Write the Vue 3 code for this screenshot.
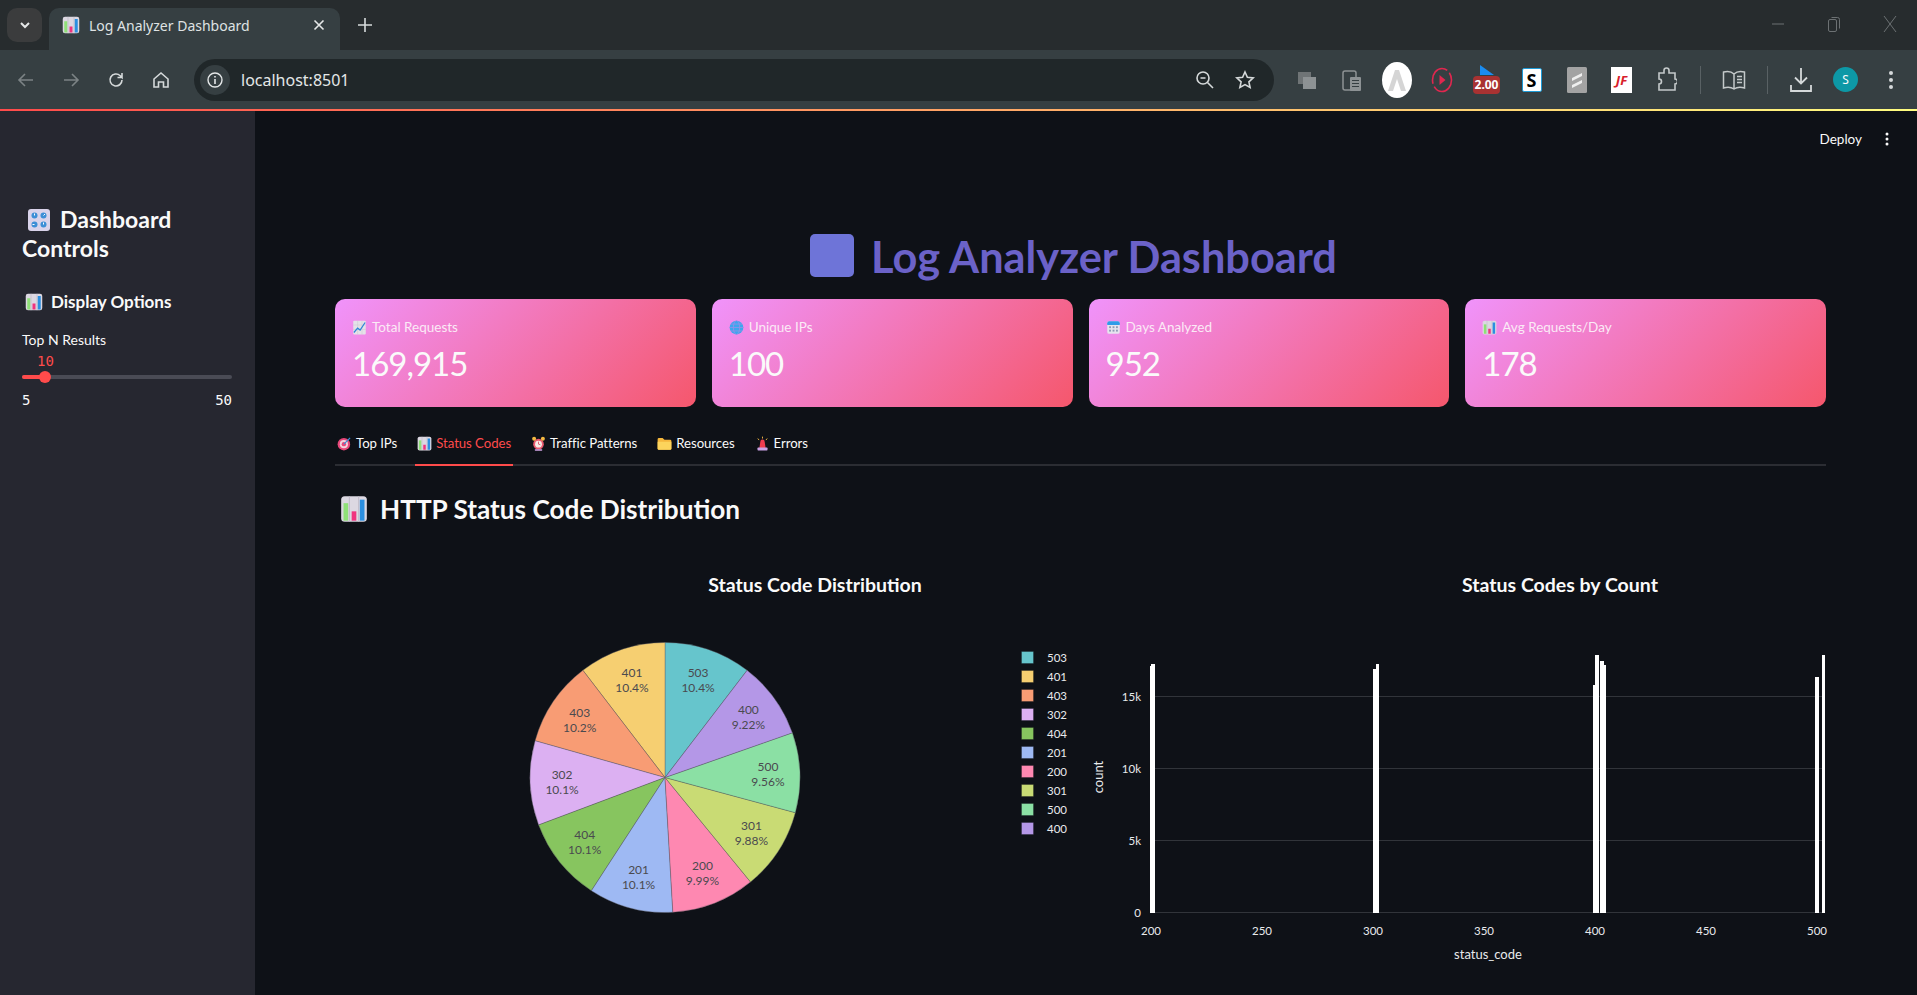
<template>
  <!-- emoji drawings, reused below -->
  <svg class="defs" width="0" height="0">
    <symbol id="e-chart" viewBox="0 0 24 24">
      <rect x="1" y="1" width="22" height="22" rx="3" fill="#dcd8e2" />
      <path d="M8 1v22M16 1v22" stroke="#bdb8c6" stroke-width=".8" />
      <rect x="3" y="7" width="4" height="15" fill="#8fe078" />
      <rect x="10" y="14" width="4" height="8" fill="#f0337f" />
      <rect x="17" y="4" width="4" height="18" fill="#2b8fe0" />
    </symbol>
    <symbol id="e-knobs" viewBox="0 0 24 24">
      <rect x="1" y="1" width="22" height="22" rx="3" fill="#d9d3ea" />
      <g fill="#3d8fd6">
        <circle cx="7.5" cy="7.5" r="3" /><circle cx="16.5" cy="7.5" r="3" />
        <circle cx="7.5" cy="16.5" r="3" /><circle cx="16.5" cy="16.5" r="3" />
      </g>
      <path d="M7.5 7.5V5.5M16.5 7.5l1.5-1.5M7.5 16.5H5.5M16.5 16.5v-2" stroke="#fff" stroke-width="1" />
    </symbol>
    <symbol id="e-up" viewBox="0 0 24 24">
      <rect x="2" y="1" width="20" height="22" rx="1.5" fill="#e4e2e8" />
      <path d="M2 8h20M2 15h20M9 1v22M16 1v22" stroke="#c6c4cc" stroke-width=".7" />
      <path d="M3 20l6-7 4 3 8-12" fill="none" stroke="#2f86d8" stroke-width="2" />
    </symbol>
    <symbol id="e-globe" viewBox="0 0 24 24">
      <circle cx="12" cy="12" r="11" fill="#3ea6ee" />
      <ellipse cx="12" cy="12" rx="5" ry="11" fill="none" stroke="#9b8fe8" stroke-width="1.2" />
      <path d="M1 12h22M3 6.5h18M3 17.5h18" stroke="#9b8fe8" stroke-width="1.2" />
    </symbol>
    <symbol id="e-cal" viewBox="0 0 24 24">
      <rect x="2" y="2" width="20" height="20" rx="3" fill="#e6e4ee" />
      <path d="M2 8V5a3 3 0 0 1 3-3h14a3 3 0 0 1 3 3v3z" fill="#2f9be8" />
      <g fill="#8f9bb5">
        <rect x="5" y="10" width="3" height="3" /><rect x="10.500" y="10" width="3" height="3" /><rect x="16" y="10" width="3" height="3" />
        <rect x="5" y="15.500" width="3" height="3" /><rect x="10.500" y="15.500" width="3" height="3" /><rect x="16" y="15.500" width="3" height="3" />
      </g>
    </symbol>
    <symbol id="e-target" viewBox="0 0 24 24">
      <circle cx="11" cy="13" r="10" fill="#e8477a" />
      <circle cx="11" cy="13" r="6.500" fill="#f3d3de" />
      <circle cx="11" cy="13" r="3.500" fill="#e8477a" />
      <path d="M11 13L21 3" stroke="#3a93dc" stroke-width="2" />
    </symbol>
    <symbol id="e-alarm" viewBox="0 0 24 24">
      <circle cx="12" cy="13" r="8.500" fill="#ea5a70" />
      <circle cx="12" cy="13" r="5.500" fill="#f7ebe6" />
      <path d="M12 9v4l3 1" fill="none" stroke="#d3455c" stroke-width="1.300" />
      <circle cx="5" cy="4.500" r="3.200" fill="#f4b942" /><circle cx="19" cy="4.500" r="3.200" fill="#f4b942" />
      <rect x="6" y="21" width="12" height="2.500" rx="1" fill="#d4a6e8" />
    </symbol>
    <symbol id="e-folder" viewBox="0 0 24 24">
      <path d="M1 5a2 2 0 0 1 2-2h6l3 3h9a2 2 0 0 1 2 2v12a2 2 0 0 1-2 2H3a2 2 0 0 1-2-2z" fill="#f6b73c" />
      <path d="M1 9h22v11a2 2 0 0 1-2 2H3a2 2 0 0 1-2-2z" fill="#fcd45c" />
    </symbol>
    <symbol id="e-siren" viewBox="0 0 24 24">
      <path d="M7 19l1.500-10a3.500 3.500 0 0 1 7 0L17 19z" fill="#ee3c50" />
      <rect x="4" y="18.500" width="16" height="4.500" rx="1" fill="#c9a2e6" />
      <path d="M12 1v3M4.500 4l2 2.500M19.500 4l-2 2.500" stroke="#f4b942" stroke-width="1.500" />
    </symbol>
  </svg>

  <div class="window">
    <!-- browser tab strip -->
    <div class="tabstrip">
      <div class="tab-menu">
        <svg width="14" height="14" viewBox="0 0 14 14"><path d="M3 5l4 4 4-4" fill="none" stroke="#e6e8e8" stroke-width="2" /></svg>
      </div>
      <div class="browser-tab">
        <svg class="favicon" width="18" height="20"><use href="#e-chart" /></svg>
        <span class="tab-title">Log Analyzer Dashboard</span>
        <svg class="tab-close" width="12" height="12" viewBox="0 0 12 12"><path d="M1.500 1.500l9 9M10.500 1.500l-9 9" stroke="#e6e8e8" stroke-width="1.600" /></svg>
      </div>
      <svg class="tab-plus" width="14" height="14" viewBox="0 0 14 14"><path d="M7 0v14M0 7h14" stroke="#d8dcdc" stroke-width="1.600" /></svg>
      <div class="win-controls">
        <svg width="14" height="14" viewBox="0 0 14 14"><path d="M1 7h12" stroke="#6c7173" stroke-width="1" /></svg>
        <svg width="14" height="18" viewBox="0 0 14 18"><rect x="1.500" y="4.500" width="8" height="12" rx="1.500" fill="none" stroke="#6c7173" /><path d="M4.500 2.500h6a2 2 0 0 1 2 2v9" fill="none" stroke="#6c7173" /></svg>
        <svg width="14" height="18" viewBox="0 0 14 18"><path d="M1 1l12 16M13 1L1 17" stroke="#6c7173" stroke-width="1" /></svg>
      </div>
    </div>

    <!-- browser toolbar -->
    <div class="toolbar">
      <div class="nav-icons">
        <svg width="18" height="18" viewBox="0 0 18 18"><path d="M16 9H2M8 3L2 9l6 6" fill="none" stroke="#7c8385" stroke-width="1.600" /></svg>
        <svg width="18" height="18" viewBox="0 0 18 18"><path d="M2 9h14M10 3l6 6-6 6" fill="none" stroke="#7c8385" stroke-width="1.600" /></svg>
        <svg width="18" height="18" viewBox="0 0 18 18"><path d="M15 9a6 6 0 1 1-1.800-4.300L15 6.500V2M15 6.500h-4.500" fill="none" stroke="#d5d9da" stroke-width="1.600" /></svg>
        <svg width="18" height="18" viewBox="0 0 18 18"><path d="M2 8l7-6 7 6v8h-4.500v-5h-5v5H2z" fill="none" stroke="#d5d9da" stroke-width="1.600" /></svg>
      </div>
      <div class="omnibox">
        <div class="info-pill">
          <svg width="16" height="16" viewBox="0 0 16 16"><circle cx="8" cy="8" r="7" fill="none" stroke="#e4e7e8" stroke-width="1.400" /><path d="M8 7v5M8 4v1.600" stroke="#e4e7e8" stroke-width="1.600" /></svg>
        </div>
        <span class="url">localhost:8501</span>
        <span class="omni-space"></span>
        <svg width="20" height="20" viewBox="0 0 20 20"><circle cx="8" cy="8" r="6" fill="none" stroke="#d5d9da" stroke-width="1.600" /><path d="M12.500 12.500L18 18M5.500 8h5" stroke="#d5d9da" stroke-width="1.600" /></svg>
        <svg class="star" width="20" height="20" viewBox="0 0 20 20"><path d="M10 2l2.400 5.300 5.800.6-4.300 3.900 1.200 5.700L10 14.600l-5.100 2.900 1.200-5.700L1.800 7.900l5.800-.6z" fill="none" stroke="#d5d9da" stroke-width="1.600" /></svg>
      </div>
      <div class="exts">
        <span class="ext"><svg width="20" height="20" viewBox="0 0 20 20"><rect x="1" y="2" width="13" height="12" fill="#6f7476" /><rect x="6" y="7" width="13" height="12" fill="#8d9294" /></svg></span>
        <span class="ext"><svg width="20" height="24" viewBox="0 0 20 24"><rect x="1" y="3" width="13" height="19" rx="2" fill="none" stroke="#8d9294" stroke-width="1.500" /><rect x="8" y="9" width="11" height="14" rx="1" fill="#8d9294" /><path d="M10 12.500h7M10 15.500h7M10 18.500h7" stroke="#363f42" /></svg></span>
        <span class="ext"><svg width="30" height="36" viewBox="0 0 30 36"><ellipse cx="15" cy="18" rx="15" ry="18" fill="#fff" /><path d="M6 29L13 8h4l7 21-5 0-4-12-4 12z" fill="#d5d5d5" /></svg></span>
        <span class="ext"><svg width="22" height="26" viewBox="0 0 22 26"><ellipse cx="11" cy="13" rx="9.500" ry="11.500" fill="none" stroke="#e0274f" stroke-width="1.600" stroke-dasharray="26 3" /><path d="M8.500 8l6 5-6 5z" fill="#e0274f" /></svg></span>
        <span class="ext speed">
          <svg width="16" height="10" viewBox="0 0 16 10"><path d="M1 0l14 10H1z" fill="#1a8cf0" /></svg>
          <b class="speed-badge">2.00</b>
        </span>
        <span class="ext"><b class="ext-s">S</b></span>
        <span class="ext"><svg width="20" height="26" viewBox="0 0 20 26"><rect width="20" height="26" rx="1.500" fill="#a3a3a3" /><path d="M5 11l10-5v3L5 14zM5 18l10-5v3L5 21z" fill="#eee" /></svg></span>
        <span class="ext"><b class="ext-jf">JF</b></span>
        <span class="ext"><svg width="20" height="26" viewBox="0 0 20 26"><path d="M2 6h5V3.500a2.500 2.500 0 0 1 5 0V6h6v6a2.500 2.500 0 0 1 0 5v6H2v-6a2.500 2.500 0 0 0 0-5z" fill="none" stroke="#c4c9ca" stroke-width="1.600" /></svg></span>
      </div>
      <span class="tool-sep"></span>
      <span class="tool-slot"><svg width="24" height="22" viewBox="0 0 24 22"><path d="M12 5C9 2 5 2 1.500 3v16C5 18 9 18 12 20c3-2 7-2 10.500-1V3C19 2 15 2 12 5zM12 5v15" fill="none" stroke="#c4c9ca" stroke-width="1.500" /><path d="M15 7.500h5M15 10.500h5M15 13.500h5" stroke="#c4c9ca" stroke-width="1.300" /></svg></span>
      <span class="tool-sep"></span>
      <span class="tool-slot"><svg width="22" height="26" viewBox="0 0 22 26"><path d="M11 1v15M5 10.500l6 6 6-6M1 18v6h20v-6" fill="none" stroke="#d5d9da" stroke-width="1.800" /></svg></span>
      <span class="tool-slot"><span class="avatar">S</span></span>
      <span class="tool-slot"><svg width="4" height="20" viewBox="0 0 4 20"><circle cx="2" cy="3" r="2" fill="#d5d9da" /><circle cx="2" cy="10" r="2" fill="#d5d9da" /><circle cx="2" cy="17" r="2" fill="#d5d9da" /></svg></span>
    </div>
    <div class="decoration"></div>

    <div class="page">
      <aside class="sidebar">
        <h2 class="side-title">
          <svg class="side-emoji" width="24" height="24"><use href="#e-knobs" /></svg>Dashboard<br />Controls
        </h2>
        <h3 class="side-sub">
          <svg width="18" height="18"><use href="#e-chart" /></svg>Display Options
        </h3>
        <div class="slider-label">Top N Results</div>
        <div class="slider-value">10</div>
        <div class="slider-track">
          <div class="slider-fill"></div>
          <div class="slider-thumb"></div>
        </div>
        <div class="slider-range"><span>5</span><span>50</span></div>
      </aside>

      <main class="main">
        <div class="st-header">
          <span>Deploy</span>
          <svg width="4" height="14" viewBox="0 0 4 14"><circle cx="2" cy="2" r="1.500" fill="#fafafa" /><circle cx="2" cy="7" r="1.500" fill="#fafafa" /><circle cx="2" cy="12" r="1.500" fill="#fafafa" /></svg>
        </div>

        <h1 class="title"><span class="title-emoji"></span><span class="title-text">Log Analyzer Dashboard</span></h1>

        <div class="metrics">
          <div v-for="m in metrics" :key="m.label" class="metric">
            <div class="metric-label">
              <svg width="15" height="15"><use :href="m.icon" /></svg>{{ m.label }}
            </div>
            <div class="metric-value">{{ m.value }}</div>
          </div>
        </div>

        <div class="tabs">
          <div v-for="t in tabs" :key="t.label" class="st-tab" :class="{ active: t.active }">
            <svg width="15" height="15"><use :href="t.icon" /></svg>{{ t.label }}
          </div>
        </div>

        <h2 class="section">
          <svg width="28" height="28"><use href="#e-chart" /></svg>HTTP Status Code Distribution
        </h2>

        <div class="charts">
          <!-- pie, viewBox uses page coordinates -->
          <svg class="chart" viewBox="335 560 737 435">
            <text x="815" y="591" class="chart-title">Status Code Distribution</text>
            <g v-for="s in slices" :key="s.code">
              <path :d="s.d" :fill="s.color" stroke="#5a5a62" stroke-width=".4" />
            </g>
            <g v-for="s in slices" :key="'l' + s.code" class="pie-label">
              <text :x="s.lx" :y="s.ly - 3">{{ s.code }}</text>
              <text :x="s.lx" :y="s.ly + 12">{{ s.pct }}%</text>
            </g>
            <g v-for="(s, i) in slices" :key="'k' + s.code">
              <rect x="1021.500" :y="650.500 + i * 19" width="12" height="12" :fill="s.color" stroke="#0e1117" stroke-opacity=".3" />
              <text x="1047" :y="661 + i * 19" class="legend-text">{{ s.code }}</text>
            </g>
          </svg>

          <!-- bars -->
          <svg class="chart" viewBox="1089 560 737 435">
            <text x="1560" y="591" class="chart-title">Status Codes by Count</text>
            <line v-for="g in yTicks" :key="g.label" x1="1150" x2="1825" :y1="g.y" :y2="g.y" stroke="#31343a" stroke-width="1" />
            <text v-for="g in yTicks" :key="'t' + g.label" x="1141" :y="g.y + 4" class="tick tick-y">{{ g.label }}</text>
            <text v-for="x in xTicks" :key="x.label" :x="x.x" y="934" class="tick tick-x">{{ x.label }}</text>
            <rect v-for="(b, i) in bars" :key="i" :x="b[0]" :y="b[2]" :width="b[1] - b[0]" :height="912 - b[2]" fill="#fff" />
            <text x="1488" y="958" class="axis-label">status_code</text>
            <text transform="translate(1103 776) rotate(-90)" class="axis-label">count</text>
          </svg>
        </div>
      </main>
    </div>
  </div>
</template>

<script setup>
const metrics = [
  { icon: '#e-up', label: 'Total Requests', value: '169,915' },
  { icon: '#e-globe', label: 'Unique IPs', value: '100' },
  { icon: '#e-cal', label: 'Days Analyzed', value: '952' },
  { icon: '#e-chart', label: 'Avg Requests/Day', value: '178' },
]

const tabs = [
  { icon: '#e-target', label: 'Top IPs' },
  { icon: '#e-chart', label: 'Status Codes', active: true },
  { icon: '#e-alarm', label: 'Traffic Patterns' },
  { icon: '#e-folder', label: 'Resources' },
  { icon: '#e-siren', label: 'Errors' },
]

const pieData = [
  ['503', 10.4, '#66c5cc'],
  ['401', 10.4, '#f6cf71'],
  ['403', 10.2, '#f89c74'],
  ['302', 10.1, '#dcb0f2'],
  ['404', 10.1, '#87c55f'],
  ['201', 10.1, '#9eb9f3'],
  ['200', 9.99, '#fe88b1'],
  ['301', 9.88, '#c9db74'],
  ['500', 9.56, '#8be0a4'],
  ['400', 9.22, '#b497e7'],
]

// slices run clockwise from the top in the order 503, 400, 500 ... 401
const cx = 665
const cy = 776.5
const r = 135
const total = pieData.reduce((a, p) => a + p[1], 0)
const drawOrder = [0, 9, 8, 7, 6, 5, 4, 3, 2, 1]
const arcs = {}
let angle = 0
for (const idx of drawOrder) {
  const p = pieData[idx]
  const sweep = (p[1] / total) * Math.PI * 2
  const a2 = angle + sweep
  const mid = angle + sweep / 2
  arcs[p[0]] = {
    code: p[0],
    pct: p[1],
    color: p[2],
    d: `M${cx} ${cy}L${cx + r * Math.sin(angle)} ${cy - r * Math.cos(angle)}A${r} ${r} 0 0 1 ${cx + r * Math.sin(a2)} ${cy - r * Math.cos(a2)}Z`,
    lx: cx + 103 * Math.sin(mid),
    ly: cy - 103 * Math.cos(mid),
  }
  angle = a2
}
const slices = pieData.map((p) => arcs[p[0]])

const yTicks = [
  { label: '15k', y: 695.5 },
  { label: '10k', y: 767.5 },
  { label: '5k', y: 839.5 },
  { label: '0', y: 911.5 },
]

const xTicks = [200, 250, 300, 350, 400, 450, 500].map((v) => ({
  label: v,
  x: 1151 + (v - 200) * 2.22,
}))

// x from, x to, top
const bars = [
  [1150, 1151, 665],
  [1151, 1155, 663],
  [1373, 1376, 668],
  [1376, 1379, 663],
  [1593, 1595, 684],
  [1595, 1599, 654],
  [1600, 1604, 660],
  [1604, 1606, 664],
  [1815, 1819, 676],
  [1822, 1825, 654],
]
</script>

<style scoped>
.defs {
  position: absolute;
}
.window {
  height: 995px;
  overflow: hidden;
  display: flex;
  flex-direction: column;
  background: #0e1117;
  color: #fafafa;
  font-family: Lato, "Noto Sans", sans-serif;
}

/* browser chrome */
.tabstrip {
  height: 50px;
  flex: none;
  display: flex;
  align-items: flex-end;
  background: #272c2e;
  padding-left: 7px;
}
.tab-menu {
  width: 35px;
  height: 34px;
  margin-bottom: 8px;
  border-radius: 10px;
  background: #3b3c3d;
  display: flex;
  align-items: center;
  justify-content: center;
}
.browser-tab {
  width: 291px;
  height: 42px;
  margin-left: 7px;
  padding: 0 15px 8px 13px;
  box-sizing: border-box;
  display: flex;
  align-items: center;
  background: #363f42;
  border-radius: 10px 10px 0 0;
  font-family: "Noto Sans", sans-serif;
  font-size: 14px;
  color: #dfe2e3;
}
.tab-title {
  margin-left: 9px;
  flex: 1;
}
.tab-plus {
  margin: 0 0 18px 18px;
}
.win-controls {
  margin-left: auto;
  margin-bottom: 17px;
  padding-right: 20px;
  display: flex;
  align-items: center;
  gap: 42px;
}
.toolbar {
  height: 59px;
  flex: none;
  display: flex;
  align-items: center;
  background: #363f42;
  padding-left: 17px;
}
.nav-icons {
  display: flex;
  gap: 27px;
}
.omnibox {
  width: 1080px;
  height: 42px;
  margin-left: 24px;
  padding: 0 19px 0 6px;
  box-sizing: border-box;
  display: flex;
  align-items: center;
  border-radius: 21px;
  background: #202729;
}
.info-pill {
  width: 30px;
  height: 30px;
  border-radius: 50%;
  background: #363f42;
  display: flex;
  align-items: center;
  justify-content: center;
}
.url {
  margin-left: 11px;
  font-family: "Noto Sans", sans-serif;
  font-size: 16px;
  color: #e4e7e8;
}
.omni-space {
  flex: 1;
}
.star {
  margin-left: 20px;
}
.exts {
  display: flex;
  margin-left: 10px;
}
.ext {
  width: 45px;
  display: flex;
  flex-direction: column;
  align-items: center;
  justify-content: center;
}
.speed-badge {
  width: 27px;
  height: 18px;
  margin-top: 1px;
  border-radius: 4px;
  background: #a83232;
  color: #fff;
  font: bold 12px/18px "Noto Sans", sans-serif;
  text-align: center;
}
.ext-s {
  width: 20px;
  height: 24px;
  border-radius: 2px;
  background: #fff;
  border: 1px solid #1d9ad6;
  box-sizing: border-box;
  color: #000;
  font: bold 18px/22px "Noto Sans", sans-serif;
  text-align: center;
}
.ext-jf {
  width: 21px;
  height: 26px;
  background: #fff;
  color: #d8202a;
  font: italic bold 13px/26px "Noto Sans", sans-serif;
  text-align: center;
}
.tool-sep {
  width: 1px;
  height: 28px;
  margin: 0 10.500px;
  background: #596164;
}
.tool-slot {
  width: 45px;
  display: flex;
  align-items: center;
  justify-content: center;
}
.avatar {
  width: 25px;
  height: 25px;
  border-radius: 50%;
  background: #0d98a6;
  font: 12px/25px "Noto Sans", sans-serif;
  text-align: center;
}
.decoration {
  height: 2px;
  flex: none;
  background: linear-gradient(90deg, #ff4b4b, #fffd80);
}

/* streamlit page */
.page {
  flex: 1;
  display: flex;
  min-height: 0;
}
.sidebar {
  width: 255px;
  flex: none;
  box-sizing: border-box;
  padding: 94px 23px 0 22px;
  background: #262730;
}
.side-title {
  margin: 0;
  font-size: 23px;
  line-height: 29px;
  font-weight: 700;
}
.side-emoji {
  margin: 0 9px 0 5px;
  vertical-align: -4px;
}
.side-sub {
  margin: 26.500px 0 0;
  display: flex;
  align-items: center;
  gap: 8px;
  padding-left: 3px;
  font-size: 17px;
  line-height: 24px;
  font-weight: 700;
}
.slider-label {
  margin-top: 16.500px;
  font-size: 14px;
  line-height: 20px;
}
.slider-value {
  margin: 1px 0 0 15px;
  color: #ff4b4b;
  font: 14px/20px "DejaVu Sans Mono", monospace;
}
.slider-track {
  position: relative;
  height: 4px;
  margin-top: 4px;
  border-radius: 2px;
  background: #4a4b55;
}
.slider-fill {
  width: 23px;
  height: 4px;
  border-radius: 2px;
  background: #ff4b4b;
}
.slider-thumb {
  position: absolute;
  left: 17px;
  top: -4px;
  width: 12px;
  height: 12px;
  border-radius: 50%;
  background: #ff4b4b;
}
.slider-range {
  margin-top: 11px;
  display: flex;
  justify-content: space-between;
  font: 14px/20px "DejaVu Sans Mono", monospace;
}
.main {
  flex: 1;
  min-width: 0;
  padding: 0 91px 0 80px;
}
.st-header {
  height: 57px;
  margin-right: -91px;
  padding: 0 28px 2px 0;
  box-sizing: border-box;
  display: flex;
  align-items: center;
  justify-content: flex-end;
  gap: 23px;
  font-size: 13.500px;
}
.title {
  margin: 0;
  height: 131px;
  box-sizing: border-box;
  padding: 56px 14px 0 0;
  display: flex;
  justify-content: center;
  align-items: flex-start;
  gap: 17px;
  font-size: 43.300px;
  line-height: 64px;
  font-weight: 700;
  color: #6b62c8;
}
.title-emoji {
  width: 44px;
  height: 43px;
  margin-top: 10px;
  border-radius: 5px;
  background: #6e74d8;
}
.metrics {
  display: grid;
  grid-template-columns: repeat(4, 1fr);
  gap: 16px;
}
.metric {
  height: 108px;
  box-sizing: border-box;
  padding: 18px 17px 0;
  border-radius: 10px;
  background: linear-gradient(135deg, #f093fb 0%, #f5576c 100%);
}
.metric-label {
  display: flex;
  align-items: center;
  gap: 5px;
  font-size: 13.500px;
  line-height: 20px;
  color: #fbeaf6;
}
.metric-value {
  margin-top: 5px;
  font-size: 33px;
  line-height: 42px;
  letter-spacing: -1px;
}
.tabs {
  margin-top: 21px;
  height: 36px;
  display: flex;
  gap: 16px;
  border-bottom: 2px solid #2b2d33;
}
.st-tab {
  height: 38px;
  box-sizing: border-box;
  padding: 0 2px 6px;
  display: flex;
  align-items: center;
  gap: 4px;
  font-size: 13.200px;
  letter-spacing: -.05px;
  border-bottom: 2px solid transparent;
}
.st-tab.active {
  color: #ff4b4b;
  border-bottom-color: #ff4b4b;
}
.section {
  margin: 25px 0 0;
  height: 36px;
  display: flex;
  align-items: center;
  gap: 12px;
  padding-left: 5px;
  font-size: 26.200px;
  font-weight: 700;
}
.charts {
  margin-top: 34px;
  display: grid;
  grid-template-columns: 737px 737px;
  justify-content: space-between;
}
.chart {
  width: 737px;
  height: 435px;
  overflow: visible;
  font-family: Lato, "Noto Sans", sans-serif;
}
.chart-title {
  fill: #fafafa;
  font-size: 19.500px;
  font-weight: 700;
  text-anchor: middle;
}
.pie-label text {
  fill: #4a4a4f;
  font-size: 12px;
  text-anchor: middle;
}
.legend-text,
.tick {
  fill: #e8eaec;
  font-size: 11.500px;
}
.tick-y {
  text-anchor: end;
}
.tick-x {
  text-anchor: middle;
}
.axis-label {
  fill: #e8eaec;
  font-size: 13px;
  text-anchor: middle;
}
</style>

<style>
html,
body {
  background: #0e1117;
}
</style>
